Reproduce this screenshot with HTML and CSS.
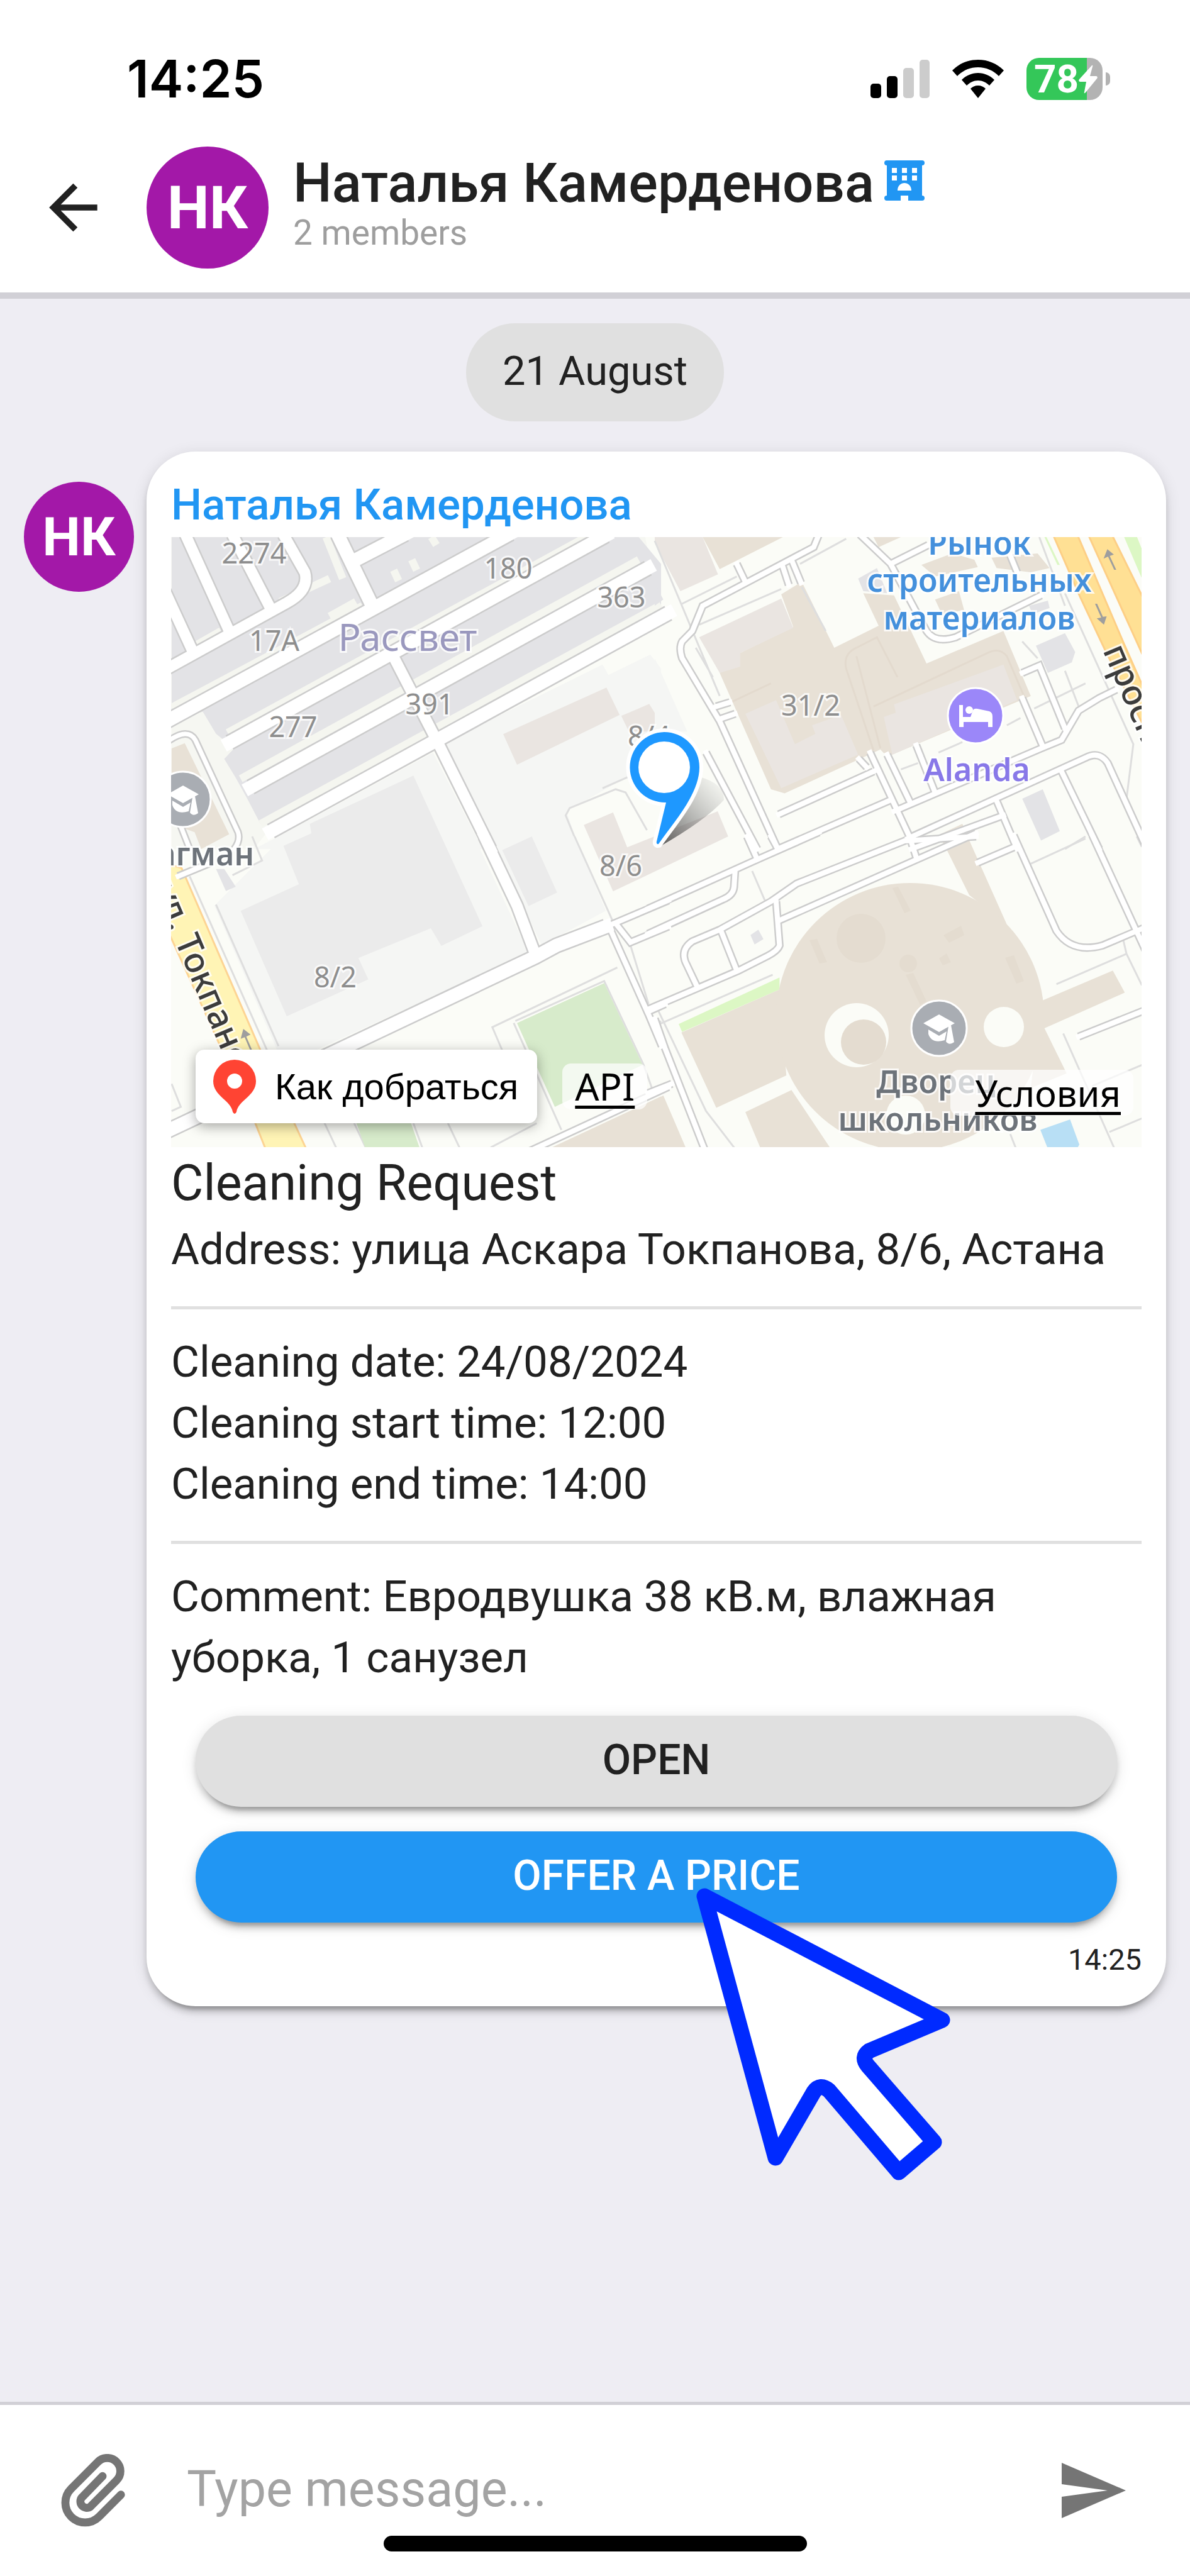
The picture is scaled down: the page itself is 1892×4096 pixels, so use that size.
FILE: index.html
```html
<!DOCTYPE html>
<html lang="en">
<head>
    <meta charset="UTF-8">
    <meta name="viewport" content="width=device-width, initial-scale=1.0">
    <title>Наталья Камерденова</title>
    <link rel="stylesheet" href="styles.css">
</head>
<body>
    <header class="app-header">
        <div class="status-bar">
            <span class="clock">14:25</span>
            <div class="status-icons">
                <svg class="signal" viewBox="0 0 94 61">
                    <rect x="0" y="38" width="17" height="23" rx="5"/>
                    <rect x="26" y="26" width="17" height="35" rx="5"/>
                    <rect class="off" x="52" y="13" width="17" height="48" rx="5"/>
                    <rect class="off" x="78" y="0" width="16" height="61" rx="5"/>
                </svg>
                <svg class="wifi" viewBox="0 0 82 61">
                    <path d="M41 0C57 0 71 6 82 17L74 26C65 17 54 12 41 12S17 17 8 26L0 17C11 6 25 0 41 0Z"/>
                    <path d="M41 21C51 21 60 25 67 32L59 41C54 36 48 33 41 33S28 36 23 41L15 32C22 25 31 21 41 21Z"/>
                    <path d="M41 41C46 41 50 43 53 46L41 61L29 46C32 43 36 41 41 41Z"/>
                </svg>
                <div class="battery">
                    <span class="level">78</span>
                    <svg class="bolt" viewBox="0 0 30 46"><path d="M21 1Q23 0 22 3L18 18H28Q31 19 29 22L11 44Q8 47 9 43L12 27H2Q-1 26 1 23Z"/></svg>
                </div>
            </div>
        </div>
        <div class="chat-bar">
            <button class="icon-button" type="button" aria-label="Back">
                <svg class="icon" viewBox="0 0 24 24"><path d="M20 11V13H8L13.5 18.5L12.08 19.92L4.16 12L12.08 4.08L13.5 5.5L8 11H20Z"/></svg>
            </button>
            <div class="avatar avatar-large">НК</div>
            <div class="chat-info">
                <h1 class="chat-title">Наталья Камерденова
                    <svg class="building" viewBox="0 0 64 64">
                        <path fill-rule="evenodd" d="M4 0H60Q64 0 64 4Q64 8 60 8V56Q64 56 64 60Q64 64 60 64H38V56H26V64H4Q0 64 0 60Q0 56 4 56V8Q0 8 0 4Q0 0 4 0ZM12 12V20H20V12ZM28 12V20H36V12ZM44 12V20H52V12ZM12 24V32H20V24ZM28 24V32H36V24ZM44 24V32H52V24ZM21 48H43C43 32 21 32 21 48Z"/>
                    </svg>
                </h1>
                <p class="chat-members">2 members</p>
            </div>
        </div>
    </header>

    <main class="chat">
        <div class="date-chip">21 August</div>
        <div class="message">
            <div class="avatar">НК</div>
            <article class="card">
                <h2 class="author">Наталья Камерденова</h2>
                <div class="map">
                    <svg class="map-canvas" viewBox="271 854 1543 970" preserveAspectRatio="xMidYMid slice">
                        <defs>
                            <g id="roads">
                                <!-- north west -->
                                <g transform="translate(230 830) scale(.523 .3333)">
                                    <path class="w-lg" d="M60 705L430 385Q500 325 485 240L420 60M122 60L255 520M265 60L380 410M60 330L145 620"/>
                                    <path class="w-xl" d="M60 955L1110 55M585 60L690 400M640 180L790 58M256 1052L1400 65M320 1265L1528 220M382 1475L1590 435"/>
                                    <path class="w-lg" d="M757 650L895 1070L1050 1560"/>
                                    <path class="w-sm" d="M70 1045Q130 980 152 1040L282 1480Q290 1520 270 1560M105 1440L135 1560"/>
                                </g>
                                <!-- north east -->
                                <g transform="translate(1040 830) scale(.5435 .3333)">
                                    <path class="w-md" d="M480 60L465 120L140 400L110 520L80 570Q70 600 80 650L190 950L360 1560M150 1100L300 1560M240 200L265 285M375 215L392 300M400 180L428 290M180 880L220 860M190 940L235 915"/>
                                    <path class="w-md" d="M600 60L690 200L795 520Q820 580 880 550L1130 350M690 200L800 110M1040 160L1060 240M1075 720L1125 685L1200 985M1075 840L1135 1070M1350 800L1300 840L1240 900L1190 1040L1130 1080L700 1380"/>
                                    <path class="w-md" d="M363 1395L640 1190M630 1100L745 1500L765 1600M680 1110L745 1330M765 1065L820 1290M597 1130L620 1170M740 1510L1260 1125Q1300 1090 1325 1150L1440 1560M1190 1190L1300 1560M1000 1330L1060 1560M360 1560L685 1330M750 1560L1020 1400"/>
                                </g>
                                <!-- south west -->
                                <g transform="translate(230 1330) scale(.523 .3333)">
                                    <path class="w-xl" d="M60 1410L600 1010L1185 575L1250 520L1400 430"/>
                                    <path class="w-lg" d="M1030 0L1130 330L1185 560"/>
                                    <path class="w-md" d="M1395 435L1590 305M1410 430L1530 850L1570 1000M1435 425L1475 505L1590 430M1530 835L1580 800M1170 1500L1590 1195M100 190L200 125"/>
                                </g>
                                <!-- south east -->
                                <g transform="translate(1040 1330) scale(.5435 .3333)">
                                    <path class="w-md" d="M-20 345L300 110L480 -20M300 110L270 0M360 60L340 0M235 165L232 240Q230 280 200 300L-20 465M940 0L740 20"/>
                                    <path class="w-md" d="M740 15L415 225L340 310L190 445L110 500Q75 540 90 600L125 720M355 310L365 520Q360 545 330 570L245 640L-20 825M195 455L240 640M365 400L940 -15M945 125L1060 45"/>
                                    <path class="w-md" d="M1050 -5L1175 450Q1220 560 1310 520L1440 430M1280 -5L1440 560M1240 955L1440 825M0 870L30 1010L145 1490M-20 1225L50 1180"/>
                                </g>
                            </g>
                        </defs>

                        <rect class="ground" x="271" y="854" width="1543" height="970"/>

                        <g transform="translate(230 830) scale(.523 .3333)">
                            <path class="verge" d="M80 72H1520L1568 460L370 1480L330 1560H80Z"/>
                            <path class="block" d="M80 72H1500L1568 200V450L350 1440L310 1320L275 1220L240 1130L270 1080L215 1010L175 905L80 940Z"/>
                            <path class="verge-line" d="M80 885L660 400M250 1005L1400 20M290 1225L1500 180M350 1440L1568 395M140 600L230 520M280 500L365 430M410 380L560 270M550 72L600 270M640 380L560 450M870 72L885 110M755 230L770 280M810 180L825 230"/>
                            <path class="yard" d="M893 1065L1390 680L1408 730L1535 632L1568 700V1235L1455 1225L1280 1380L1320 1560H1050Z"/>
                            <path class="yard" d="M400 1505L875 1100L1025 1560H330Z"/>
                            <path class="pink" d="M1088 1012L1402 790L1442 920L1130 1158ZM1447 925L1532 868L1568 960V1000H1470Z"/>
                            <path class="beige" d="M80 1080L120 1055L255 1490L170 1560L150 1480L80 1440Z"/>
                            <path class="thin" d="M1390 1270L1470 1215M1320 1560L1278 1400L1290 1365L1430 1275L1460 1290L1525 1470"/>
                        </g>
                        <g transform="translate(1040 830) scale(.5435 .3333)">
                            <path class="yard" d="M0 650L95 1000H0Z"/>
                            <path class="beige" d="M140 72H375L190 225ZM190 720L250 625L405 500L370 345L430 285L525 600L655 495L610 340L700 350L795 675L1020 520L1100 830L680 1120L660 1085L380 1295L340 1275ZM640 72H720L655 120ZM780 205L870 150L935 180L945 215L820 260ZM820 370L890 330L905 420L840 440ZM985 170L1120 150L1155 220L1100 240L1000 220ZM835 1490L900 1440L930 1560H850Z"/>
                            <path class="pink" d="M0 72H140L185 250L75 330L0 100ZM130 550L370 365L405 505L250 625V690L190 720ZM265 915L355 850L410 1060L470 1010L460 970L545 920L595 1110L370 1270ZM670 930L705 910L700 870L1020 680L1060 850L695 1110Z"/>
                            <path class="block" d="M1115 590L1200 530L1230 620L1220 670L1150 720ZM1075 1320L1135 1275L1185 1475L1130 1520ZM0 290L25 370L0 400ZM595 270L650 220L680 340L610 330ZM1095 400L1150 375L1155 410L1105 440Z"/>
                            <path class="beige-line" d="M560 700Q550 630 590 600L650 550L710 740M560 700L640 1090M640 880L980 620Q1010 600 1030 640L1080 830M210 870L340 770M590 640L660 1080"/>
                            <path class="thin" d="M0 90L190 830M80 390L240 260M130 490L370 320M425 200L560 80M430 310L500 520M830 1100L900 1050M1030 970L1070 935M1110 890L1260 770M720 1180L770 1150M1200 340L1400 1060L1380 1320M1075 570L1120 650M1200 710L1240 880M120 600L170 740M1125 72L1200 400M1200 1560L1260 1500"/>
                            <path class="avenue" d="M1165 60H1236L1375 590L1440 830L1470 1100L1320 620L1245 360ZM1268 60H1337L1440 400V680Z"/>
                            <path class="lime" d="M1370 60H1408L1425 130V270ZM1140 72H1146L1185 205H1178Z"/>
                            <path class="arrow" d="M1313 175L1324 130L1343 155L1331 162L1350 228H1344L1326 165ZM1293 460L1306 456L1288 390H1294L1311 452L1322 450L1314 490Z"/>
                        </g>
                        <g transform="translate(230 1330) scale(.523 .3333)">
                            <path class="yard" d="M210 330L420 0H1000L1165 555L420 1090ZM1050 0H1305L1400 355L1205 520Z"/>
                            <path class="hall" d="M420 45L505 -15L500 -60L815 -290L1025 428L900 522L868 438L648 580L678 682L430 858L290 355L467 228ZM1085 65L1175 0L1252 268L1165 332Z"/>
                            <path class="pink" d="M1333 -55L1422 -115L1465 52L1740 -120L1772 0L1422 262Z"/>
                            <path class="block" d="M215 155H240L275 240L245 260Z"/>
                            <path class="thin" d="M135 190L370 1020M215 325L405 1000M1305 0L1420 400M265 185L355 115L325 0M1435 625L1055 910L1085 1020M1125 880L1395 690L1515 1090L1540 1200M1120 890L1265 1400M1568 880L1545 910M80 1180L108 1290L80 1310M545 1368L580 1484M920 1368L955 1484M635 1368L670 1484M815 1368L842 1484M1190 1368L1050 1484M1475 520L1530 800"/>
                            <path class="park" d="M1130 890L1395 700L1512 1090L1245 1290ZM640 1360H806L835 1490H670Z"/>
                            <path class="street" d="M60 130L110 150L350 1020L492 1500H368L335 1370L60 420Z"/>
                            <path class="arrow" d="M290 965L298 918L320 945L307 955L325 1020H319L302 958Z"/>
                            <path class="beige" d="M1235 1484L1568 1240L1600 1484Z"/>
                        </g>
                        <g transform="translate(1040 1330) scale(.5435 .3333)">
                            <path class="beige" d="M0 1260L25 1235L92 1490H0ZM78 935L365 730L385 1140L180 1295ZM265 1315L400 1210L515 1490H310ZM835 0H915L1030 420L920 280ZM1130 785L1340 640L1375 745L1140 915L1205 1130L1100 1200Z"/>
                            <path class="lime" d="M70 895L365 673V730L80 932Z"/>
                            <path class="block" d="M280 470L303 445L318 490L292 515Z"/>
                            <path class="pool" d="M1128 1400L1215 1350L1242 1470L1235 1490H1150Z"/>
                            <path class="thin" d="M0 905L345 660M285 165L322 305M10 830L150 1310L235 1490M1175 705L1380 560L1370 490M1100 130L1260 10M1380 560L1425 710M1195 940L1345 1490M1280 1190L1425 1090M1330 1410L1425 1345M1410 0L1425 50M1040 1420L1057 1490"/>
                        </g>
                        <circle class="beige" cx="1446" cy="1617" r="213"/>
                        <path class="beige-dark" d="M1418 1412L1427 1410L1447 1448L1437 1452ZM1286 1495L1298 1493L1314 1530L1302 1532ZM1499 1487L1527 1472L1532 1487L1508 1499ZM1492 1524L1504 1516L1511 1530L1498 1535ZM1597 1523L1611 1519L1627 1560L1615 1564ZM1439 1550L1451 1547L1472 1592L1462 1598Z"/>
                        <circle class="beige-dark" cx="1368" cy="1492" r="39"/>
                        <circle class="beige-dark" cx="1443" cy="1532" r="14"/>
                        <circle class="ground" cx="1361" cy="1646" r="51"/>
                        <circle class="beige-dark" cx="1372" cy="1657" r="36"/>
                        <circle class="ground" cx="1595" cy="1633" r="32"/>
                        <circle class="ground" cx="1439" cy="1773" r="31"/>

                        <use href="#roads" class="road-edge"/>
                        <use href="#roads" class="road-fill"/>

                        <g class="label">
                            <text x="403" y="896">2274</text>
                            <text x="807" y="920">180</text>
                            <text x="987" y="966">363</text>
                            <text x="435" y="1035">17А</text>
                            <text x="682" y="1136">391</text>
                            <text x="465" y="1172">277</text>
                            <text x="1031" y="1187">8/4</text>
                            <text x="1288" y="1138">31/2</text>
                            <text x="986" y="1393">8/6</text>
                            <text x="532" y="1570">8/2</text>
                        </g>
                        <text class="label label-district" x="647" y="1035">Рассвет</text>
                        <g class="label label-place label-market">
                            <text x="1556" y="882">Рынок</text>
                            <text x="1556" y="941">строительных</text>
                            <text x="1556" y="1001">материалов</text>
                        </g>
                        <text class="label label-place label-hotel" x="1552" y="1242">Alanda</text>
                        <g class="label label-place label-school">
                            <text x="1487" y="1738">Дворец</text>
                            <text x="1490" y="1798">школьников</text>
                            <text x="300" y="1376">Шагман</text>
                        </g>
                        <text class="label label-street" transform="translate(242 1414) rotate(67)">ул. Токпанова</text>
                        <text class="label label-street" transform="translate(1752 1034) rotate(67)">проспект</text>

                        <circle class="poi poi-hotel" cx="1550" cy="1138" r="44"/>
                        <path class="poi-glyph" d="M1524 1121H1530V1140H1542L1546 1129Q1548 1126 1553 1127L1572 1131Q1577 1133 1577 1139V1156H1570V1148H1531V1156H1524Z"/>
                        <circle class="poi-glyph" cx="1540" cy="1129" r="6"/>
                        <g id="school-poi">
                            <circle class="poi poi-school" cx="1492" cy="1635" r="44"/>
                            <path class="poi-glyph" d="M1467 1627L1492 1613L1517 1627L1492 1641ZM1475 1637L1492 1647L1504 1640L1501 1654Q1480 1660 1475 1644ZM1507 1632L1511 1630L1516 1657Q1508 1663 1503 1656Z"/>
                        </g>
                        <use href="#school-poi" x="-1202" y="-364"/>

                        <linearGradient id="pin-shadow" x1="0" y1="1" x2="1" y2="0">
                            <stop offset="0" stop-color="#333" stop-opacity=".8"/>
                            <stop offset="1" stop-color="#888" stop-opacity="0"/>
                        </linearGradient>
                        <path fill="url(#pin-shadow)" d="M1048 1346L1110 1235Q1150 1245 1150 1272Q1120 1305 1048 1346Z"/>
                        <path class="pin" d="M1055 1164A56 56 0 0 1 1111 1220C1111 1262 1072 1305 1046 1342Q1042 1343 1043 1338L1058 1276A56 56 0 1 1 1055 1164Z"/>
                        <circle class="pin-hole" cx="1055" cy="1220" r="41"/>
                    </svg>
                    <div class="map-controls">
                        <button class="route-button" type="button">
                            <svg class="route-pin" viewBox="0 0 68 86"><path fill-rule="evenodd" d="M34 0A34 34 0 0 1 68 34C68 58 40 64 37 83Q34 89 31 83C28 64 0 58 0 34A34 34 0 0 1 34 0ZM34 22A12 12 0 1 0 34 46A12 12 0 1 0 34 22Z"/></svg>
                            Как добраться
                        </button>
                        <a class="map-link" href="#api">API</a>
                        <a class="map-link map-terms" href="#terms">Условия</a>
                    </div>
                </div>
                <h3 class="request-title">Cleaning Request</h3>
                <p class="line">Address: улица Аскара Токпанова, 8/6, Астана</p>
                <hr class="divider">
                <p class="line">Cleaning date: 24/08/2024</p>
                <p class="line">Cleaning start time: 12:00</p>
                <p class="line">Cleaning end time: 14:00</p>
                <hr class="divider">
                <p class="line">Comment: Евродвушка 38 кВ.м, влажная уборка, 1 санузел</p>
                <div class="actions">
                    <button class="button" type="button">OPEN</button>
                    <button class="button button-primary" type="button">OFFER A PRICE</button>
                    <svg class="cursor" viewBox="0 0 410 470"><path d="M20 20L398 217L282 266Q268 276 280 290L385 411L329 459L218 329Q204 317 194 331L133 436Z"/></svg>
                </div>
                <time class="time">14:25</time>
            </article>
        </div>
    </main>

    <footer class="composer">
        <form class="composer-form">
            <button class="icon-button" type="button" aria-label="Attach file">
                <svg class="clip" viewBox="111 69 304 344"><path d="M395 262L291 366A93 93 0 0 1 159 234L286 106A62 62 0 0 1 374 194L251 318A30 30 0 0 1 209 276L308 174"/></svg>
            </button>
            <input class="composer-input" type="text" placeholder="Type message..." aria-label="Message">
            <button class="icon-button" type="button" aria-label="Send">
                <svg class="send" viewBox="0 0 102 88"><path d="M0 0L102 44L0 88V54L73 44L0 34Z"/></svg>
            </button>
        </form>
        <div class="home-bar"></div>
    </footer>
</body>
</html>
```
FILE: styles.css
```css
* {
    box-sizing: border-box;
}
body {
    margin: 0;
    min-height: 100vh;
    display: flex;
    flex-direction: column;
    background: #eeedf3;
    color: #212121;
    font-family: Roboto, sans-serif;
    font-size: 69px;
    line-height: 97px;
}
h1, h2, h3, p {
    margin: 0;
    font-size: inherit;
    font-weight: 400;
}
button {
    border: 0;
    padding: 0;
    background: none;
    color: inherit;
    font: inherit;
}
svg {
    display: block;
    flex: none;
}

/* header */
.app-header {
    background: #fff;
    border-bottom: 10px solid #d1d0d6;
    padding-bottom: 38px;
}
.status-bar {
    display: flex;
    justify-content: space-between;
    align-items: center;
    height: 233px;
    padding: 18px 127px 0 202px;
}
.clock {
    color: #000;
    font-family: Inter, sans-serif;
    font-size: 82px;
    font-weight: 600;
}
.status-icons {
    display: flex;
    align-items: center;
    gap: 36px;
}
.signal {
    width: 94px;
}
.signal .off {
    fill: #ccc;
}
.wifi {
    width: 82px;
}
.battery {
    position: relative;
    display: flex;
    align-items: center;
    width: 121px;
    height: 67px;
    margin-right: 12px;
    padding-left: 12px;
    border-radius: 20px;
    background: linear-gradient(to right, #34c759 96px, #b3b3b3 96px);
}
.battery::after {
    content: "";
    position: absolute;
    left: 126px;
    width: 7px;
    height: 21px;
    border-radius: 0 7px 7px 0;
    background: #b3b3b3;
}
.level {
    color: #fff;
    font-size: 62px;
    font-weight: 700;
}
.bolt {
    width: 30px;
    fill: #fff;
}
.chat-bar {
    display: flex;
    align-items: center;
    padding: 0 58px;
}
.icon-button {
    flex: none;
}
.icon {
    width: 116px;
    fill: #212121;
}
.avatar {
    flex: none;
    display: flex;
    align-items: center;
    justify-content: center;
    width: 175px;
    height: 175px;
    border-radius: 50%;
    background: #a318a8;
    color: #fff;
    font-size: 86px;
    font-weight: 700;
}
.avatar-large {
    width: 194px;
    height: 194px;
    margin-left: 59px;
    font-size: 95px;
}
.chat-info {
    margin-left: 39px;
    padding-bottom: 18px;
}
.chat-title {
    display: flex;
    align-items: center;
    gap: 16px;
    font-size: 87px;
    font-weight: 500;
}
.building {
    width: 64px;
    margin-bottom: 8px;
    fill: #2196f3;
}
.chat-members {
    color: #9e9e9e;
    font-size: 55px;
    line-height: 60px;
}

/* messages */
.chat {
    flex: 1;
    padding: 39px 38px 0;
}
.date-chip {
    width: fit-content;
    margin: 0 auto 48px;
    padding: 0 58px 4px;
    border-radius: 78px;
    background: #e0e0e0;
    font-size: 65px;
    line-height: 152px;
}
.message {
    display: flex;
    gap: 20px;
}
.message > .avatar {
    margin-top: 48px;
}
.card {
    flex: 1;
    min-width: 0;
    display: flex;
    flex-direction: column;
    padding: 36px 39px 26px;
    border-radius: 78px;
    background: #fff;
    box-shadow: 0 15px 5px -10px rgba(0, 0, 0, .2), 0 10px 10px rgba(0, 0, 0, .14), 0 5px 25px rgba(0, 0, 0, .12);
}
.author {
    margin-bottom: 3px;
    color: #2196f3;
    font-weight: 500;
}
.request-title {
    font-size: 79px;
    line-height: 114px;
}
.divider {
    align-self: stretch;
    height: 5px;
    margin: 42px 0 35px;
    border: 0;
    background: #e0e0e0;
}
.actions {
    position: relative;
    display: flex;
    flex-direction: column;
    gap: 39px;
    padding: 44px 39px 0;
}
.button {
    height: 145px;
    padding-bottom: 4px;
    border-radius: 73px;
    background: #e0e0e0;
    box-shadow: 0 15px 5px -10px rgba(0, 0, 0, .2), 0 10px 10px rgba(0, 0, 0, .14), 0 5px 25px rgba(0, 0, 0, .12);
    font-size: 66px;
    font-weight: 500;
}
.button-primary {
    background: #2196f3;
    color: #fff;
}
.cursor {
    position: absolute;
    left: calc(50% + 56px);
    top: 311px;
    width: 410px;
    overflow: visible;
    fill: #fff;
    stroke: #002aff;
    stroke-width: 25px;
    stroke-linejoin: round;
}
.time {
    align-self: flex-end;
    margin-top: 10px;
    font-size: 47px;
}

/* map */
.map {
    position: relative;
}
.map-canvas {
    width: 100%;
    height: 970px;
}
.map-canvas path {
    vector-effect: non-scaling-stroke;
}
.ground {
    fill: #fbfcf7;
}
.verge {
    fill: #f6f7f2;
}
.verge-line {
    fill: none;
    stroke: #f5f6f0;
    stroke-width: 12px;
}
.block {
    fill: #e3e3e6;
}
.yard {
    fill: #f5f6f4;
}
.hall {
    fill: #ebebeb;
}
.pink {
    fill: #eae5e1;
}
.beige {
    fill: #e8e1d6;
}
.beige-dark {
    fill: #e4dcd0;
}
.beige-line {
    fill: none;
    stroke: #e3dace;
    stroke-width: 3px;
}
.park {
    fill: #d7ebcb;
}
.lime {
    fill: #dcf7c4;
}
.pool {
    fill: #b8dff5;
}
.thin {
    fill: none;
    stroke: #dedede;
    stroke-width: 3px;
}
.avenue {
    fill: #ffe094;
    stroke: #fdcf86;
    stroke-width: 3px;
}
.street {
    fill: #fff4b5;
    stroke: #fdd493;
    stroke-width: 3px;
}
.arrow {
    fill: #9e9e9e;
}
.road-edge {
    --edge: 5px;
    fill: none;
    stroke: #ccc;
}
.road-fill {
    --edge: 0px;
    fill: none;
    stroke: #fff;
    stroke-linecap: square;
}
.w-sm {
    stroke-width: calc(7px + var(--edge));
}
.w-md {
    stroke-width: calc(8px + var(--edge));
}
.w-lg {
    stroke-width: calc(17px + var(--edge));
}
.w-xl {
    stroke-width: calc(21px + var(--edge));
}
.label {
    fill: #8e8e8e;
    stroke: rgba(255, 255, 255, .8);
    stroke-width: 6px;
    paint-order: stroke;
    font-family: "Noto Sans", sans-serif;
    font-size: 45px;
    text-anchor: middle;
}
.label-district {
    fill: #9a98be;
    font-size: 60px;
}
.label-place {
    font-size: 50px;
    font-weight: 600;
}
.label-market {
    fill: #4490dc;
}
.label-hotel {
    fill: #8878e8;
}
.label-school {
    fill: #6d737a;
}
.label-street {
    fill: #3c3c3c;
    font-size: 55px;
    font-weight: 500;
    text-anchor: start;
}
.poi {
    stroke: #fff;
    stroke-width: 3px;
}
.poi-hotel {
    fill: #9b87f9;
}
.poi-school {
    fill: #a9adb3;
}
.poi-glyph {
    fill: #fff;
}
.pin {
    fill: #1e98ff;
    stroke: #fff;
    stroke-width: 12px;
    paint-order: stroke;
}
.pin-hole {
    fill: #fff;
}
.map-controls {
    position: absolute;
    left: 39px;
    right: 13px;
    bottom: 38px;
    display: flex;
    align-items: center;
}
.route-button {
    display: flex;
    align-items: center;
    gap: 30px;
    height: 117px;
    padding: 0 30px 0 28px;
    border-radius: 14px;
    background: #fff;
    box-shadow: 0 5px 20px rgba(0, 0, 0, .35);
    color: #000;
    font-family: "Liberation Sans", sans-serif;
    font-size: 58px;
}
.route-pin {
    width: 68px;
    fill: #ff4433;
}
.map-link {
    margin-left: 40px;
    padding: 0 20px;
    border-radius: 14px;
    background: rgba(255, 255, 255, .7);
    color: #000;
    font-family: "Noto Sans", sans-serif;
    font-size: 60px;
    line-height: 73px;
    text-decoration-thickness: 5px;
    text-underline-offset: 8px;
}
.map-terms {
    margin: 20px 0 0 auto;
    padding-left: 39px;
    font-size: 58px;
}

/* composer */
.composer {
    background: #fff;
    border-top: 5px solid #d1d0d6;
    padding: 78px 0 39px;
}
.composer-form {
    display: flex;
    align-items: center;
    gap: 98px;
    height: 116px;
    padding: 0 102px 0 97px;
}
.clip {
    width: 102px;
    fill: none;
    stroke: #757575;
    stroke-width: 38px;
    stroke-linecap: round;
}
.composer-input {
    flex: 1;
    min-width: 0;
    padding: 0 0 4px;
    border: 0;
    outline: 0;
    color: #212121;
    font: 400 79px/97px Roboto, sans-serif;
}
.composer-input::placeholder {
    color: #a3a3a3;
}
.send {
    width: 102px;
    fill: #757575;
}
.home-bar {
    width: 673px;
    height: 25px;
    margin: 14px auto 0;
    border-radius: 13px;
    background: #000;
}
```
